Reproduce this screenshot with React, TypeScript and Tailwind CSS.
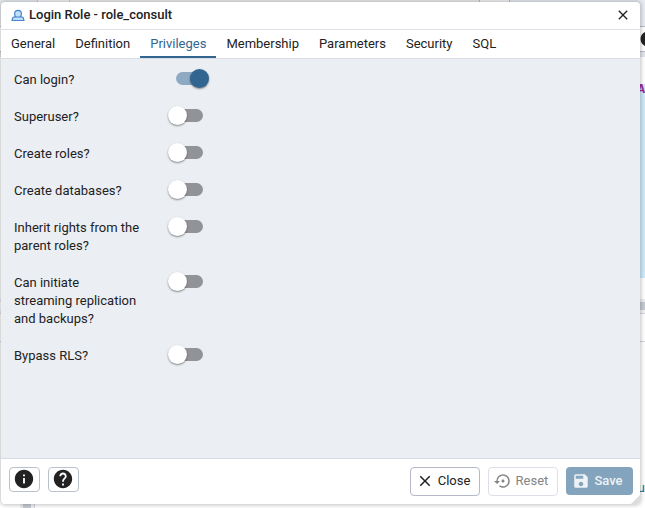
import { useState } from "react";
import {
  MdClose,
  MdHelp,
  MdInfo,
  MdSave,
  MdSettingsBackupRestore,
} from "react-icons/md";

const tabs = [
  "General",
  "Definition",
  "Privileges",
  "Membership",
  "Parameters",
  "Security",
  "SQL",
];

const privileges = [
  { id: "login", label: "Can login?", on: true },
  { id: "super", label: "Superuser?", on: false },
  { id: "roles", label: "Create roles?", on: false },
  { id: "databases", label: "Create databases?", on: false },
  { id: "inherit", label: "Inherit rights from the parent roles?", on: false },
  {
    id: "replication",
    label: "Can initiate streaming replication and backups?",
    on: false,
  },
  { id: "bypass", label: "Bypass RLS?", on: false },
];

function RoleIcon() {
  return (
    <svg viewBox="0 0 14 14" className="size-[14px]" aria-hidden="true">
      <path
        d="M1 12.5L1.7 10Q2 9 3.2 9H4.8Q3.6 7.6 3.6 5.6C3.6 3.6 4.9 2.4 7 2.4S10.4 3.6 10.4 5.6Q10.4 7.6 9.2 9H10.8Q12 9 12.3 10L13 12.5Z"
        fill="#bfe0fa"
        stroke="#4a82cc"
        strokeWidth="1.2"
        strokeLinejoin="round"
      />
      <path d="M4.8 9H9.2" fill="none" stroke="#4a82cc" strokeWidth="1" />
    </svg>
  );
}

function Switch({ id, on }: { id: string; on: boolean }) {
  const [checked, setChecked] = useState(on);
  return (
    <input
      id={id}
      type="checkbox"
      role="switch"
      checked={checked}
      onChange={(e) => setChecked(e.target.checked)}
      className="relative mt-px h-[13px] w-[27px] shrink-0 appearance-none rounded-full bg-[#929397] before:absolute before:-top-[3px] before:-left-2 before:size-[19px] before:rounded-full before:bg-white before:shadow-[0_1px_2px_rgba(0,0,0,0.45)] checked:bg-[#8ea9c2] checked:before:left-[14px] checked:before:bg-[#326690]"
    />
  );
}

/* The query tool window that lies under the dialog. */
function Workspace() {
  return (
    <div className="absolute inset-0 flex flex-col bg-white" aria-hidden="true">
      <div className="flex h-[26px] shrink-0 bg-[#e8ebf1]">
        <div className="w-[38px] border-r border-[#c9cdd8]" />
        <div className="w-8 border-r border-[#c9cdd8] bg-[#f3f4f7]" />
        <div className="flex-1 bg-[#ededef]" />
        <div className="w-[31px] border-x border-[#b9bdcb] bg-[#f3f4f7]" />
        <div className="w-[135px]" />
      </div>
      <div className="flex h-[26px] shrink-0 items-center justify-end overflow-hidden border-y border-[#b9bdcb]">
        <MdInfo className="-mr-3 size-[18px] shrink-0 text-[#222222]" />
      </div>
      <div className="h-[5px] shrink-0 bg-[#e3e5ec]" />
      <div className="h-[27px] shrink-0" />
      <div className="ml-[38px] h-[194px] shrink-0 bg-[#cfeafa] text-right font-[Liberation_Mono,monospace] text-[13px] leading-3 font-bold text-[#a02c96]">
        MA
      </div>
      <div className="h-[21px] shrink-0" />
      <div className="h-[3px] shrink-0 bg-[#ebedf0]" />
      <div className="ml-[38px] h-2 shrink-0 bg-[#c6cad2]" />
      <div className="h-1 shrink-0 border-b border-[#d3d6de] bg-[#f1f2f4]" />
      <div className="h-7 shrink-0 border-b border-[#d3d6de]" />
      <div className="flex flex-1 flex-col justify-end">
        <div className="text-right text-[13px] leading-4 text-[#326690]">u</div>
        <div className="flex h-3">
          <div className="w-5" />
          <div className="w-[3px] bg-[#ebedf0]" />
          <div className="w-2 bg-[#c6cad2]" />
          <div className="w-1 border-r border-[#d3d6de] bg-[#f1f2f4]" />
        </div>
      </div>
    </div>
  );
}

export default function App() {
  const [tab, setTab] = useState("Privileges");
  return (
    <div className="relative flex min-h-screen overflow-hidden pt-0.5 pr-[5px] pb-1 pl-px font-[Roboto,sans-serif] text-[13px] text-[#222222]">
      <Workspace />
      <section
        role="dialog"
        aria-labelledby="dialog-title"
        className="relative flex flex-1 flex-col overflow-hidden rounded-[4px] bg-white shadow-[0_0_4px_1px_rgba(0,0,0,0.25)]"
      >
        <header className="flex h-7 items-center gap-1 border-b border-[#dddfe6] pr-2 pb-0.5 pl-[10px]">
          <RoleIcon />
          <h1 id="dialog-title" className="flex-1 font-medium">
            Login Role - role_consult
          </h1>
          <button type="button" aria-label="Close dialog" className="p-px">
            <MdClose className="size-4" />
          </button>
        </header>
        <div role="tablist" className="flex h-[29px] border-b border-[#dadde4]">
          {tabs.map((name) => (
            <button
              key={name}
              type="button"
              role="tab"
              aria-selected={name === tab}
              onClick={() => setTab(name)}
              className="border-b-2 border-transparent px-[10px] pt-0.5 aria-selected:border-[#326690] aria-selected:text-[#326690]"
            >
              {name}
            </button>
          ))}
        </div>
        <div
          role="tabpanel"
          aria-label={tab}
          className="flex flex-1 flex-col gap-[19px] bg-[#ebeef3] px-[13px] py-3"
        >
          {privileges.map(({ id, label, on }) => (
            <div key={id} className="flex items-start gap-9">
              <label htmlFor={id} className="w-[126px] leading-[18px]">
                {label}
              </label>
              <Switch id={id} on={on} />
            </div>
          ))}
        </div>
        <footer className="relative flex items-start gap-2 border-t border-[#d8dae5] px-2 py-2 pr-[7px]">
          <button
            type="button"
            aria-label="SQL help"
            className="flex h-[25px] w-[31px] items-center rounded-[4px] border border-[#bac1cd] pb-0.5 pl-[3px]"
          >
            <MdInfo className="size-[22px] shrink-0" />
          </button>
          <button
            type="button"
            aria-label="Help"
            className="flex h-[25px] w-[31px] items-center rounded-[4px] border border-[#bac1cd] pb-0.5 pl-[3px]"
          >
            <MdHelp className="size-[22px] shrink-0" />
          </button>
          <div className="flex-1" />
          <button
            type="button"
            className="flex h-[29px] w-[70px] items-center justify-center gap-1 rounded-[4px] border border-[#b4b8c8] pr-1 pb-0.5"
          >
            <MdClose className="size-[18px]" />
            Close
          </button>
          <button
            type="button"
            disabled
            className="flex h-[29px] w-[70px] items-center justify-center gap-1 rounded-[4px] border border-[#dddfe6] pr-1 pb-0.5 text-[#858585]"
          >
            <MdSettingsBackupRestore className="size-[18px]" />
            Reset
          </button>
          <button
            type="button"
            disabled
            className="flex h-7 w-[67px] items-center justify-center gap-1 rounded-[4px] bg-[#84a3bc] pr-1 font-medium text-[#eef2f6]"
          >
            <MdSave className="size-[18px]" />
            Save
          </button>
          <svg
            viewBox="0 0 9 9"
            className="absolute right-0 bottom-0 size-[9px]"
            aria-hidden="true"
          >
            <path d="M9 0V9H0Z" fill="#dcdcdc" />
          </svg>
        </footer>
      </section>
    </div>
  );
}
